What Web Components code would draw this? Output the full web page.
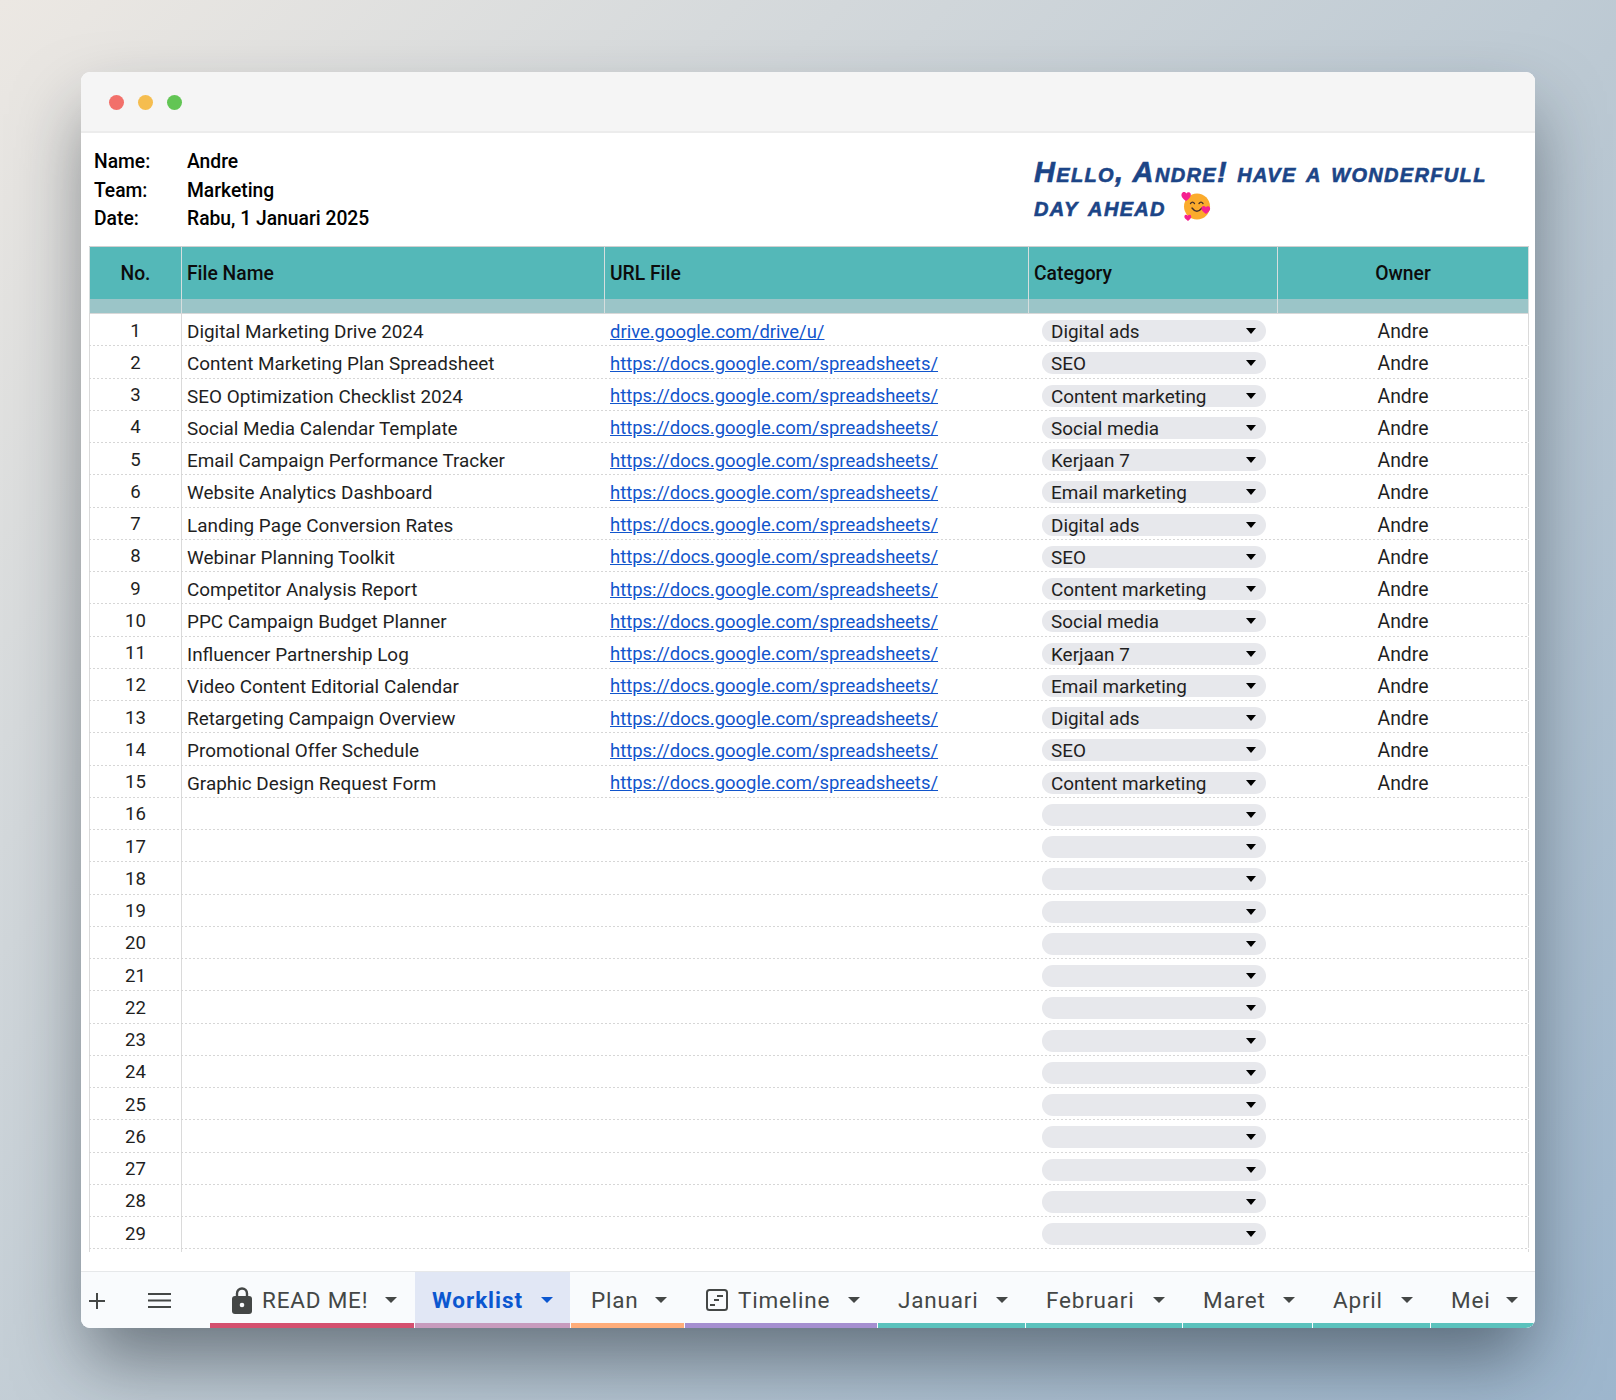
<!DOCTYPE html>
<html>
<head>
<meta charset="utf-8">
<title>Worklist</title>
<style>
  html, body { margin: 0; padding: 0; }
  body {
    width: 1616px;
    height: 1400px;
    overflow: hidden;
    box-sizing: border-box;
    padding: 72px 81px 0;
    background: linear-gradient(135deg, #ece8e3 0%, #d3d8db 28%, #bcc9d3 55%, #9db6cd 100%);
    font-family: Roboto, "Liberation Sans", sans-serif;
  }
</style>
</head>
<body>
<app-window>
  <info-header slot="top" name="Andre" team="Marketing" date="Rabu, 1 Januari 2025"></info-header>
  <work-sheet></work-sheet>
  <sheet-tabs slot="bottom">
    <sheet-tab width="205" color="#d4506f" label="READ ME!" icon="lock" pad="22"></sheet-tab>
    <sheet-tab width="156" color="#c79bbd" label="Worklist" active pad="17"></sheet-tab>
    <sheet-tab width="114" color="#ffad7a" label="Plan"></sheet-tab>
    <sheet-tab width="193" color="#a58fd0" label="Timeline" icon="timeline" pad="21"></sheet-tab>
    <sheet-tab width="148" color="#5bc2bd" label="Januari"></sheet-tab>
    <sheet-tab width="157" color="#5bc2bd" label="Februari"></sheet-tab>
    <sheet-tab width="130" color="#5bc2bd" label="Maret"></sheet-tab>
    <sheet-tab width="118" color="#5bc2bd" label="April"></sheet-tab>
    <sheet-tab width="104" color="#5bc2bd" label="Mei" last></sheet-tab>
  </sheet-tabs>
</app-window>

<script>
// Window frame with the three traffic lights
class AppWindow extends HTMLElement {
  constructor() {
    super();
    this.attachShadow({ mode: 'open' });
    this.shadowRoot.innerHTML = `
      <style>
        :host {
          display: flex;
          flex-direction: column;
          width: 1454px;
          height: 1256px;
          background: #fff;
          border-radius: 9px;
          overflow: hidden;
          box-shadow: 0 36px 70px -6px rgba(20, 30, 40, .5);
        }
        .bar {
          flex: none;
          display: flex;
          align-items: center;
          gap: 14px;
          height: 61px;
          padding-left: 28px;
          padding-top: 1px;
          box-sizing: border-box;
          background: #f5f5f5;
          border-bottom: 2px solid #ececec;
        }
        .dot { width: 15px; height: 15px; border-radius: 50%; }
        .main { flex: 1; min-height: 0; }
      </style>
      <div class="bar">
        <div class="dot" style="background:#f2706a"></div>
        <div class="dot" style="background:#f5bd4f"></div>
        <div class="dot" style="background:#62c554"></div>
      </div>
      <slot name="top"></slot>
      <div class="main"><slot></slot></div>
      <slot name="bottom"></slot>
    `;
  }
}

// Name / team / date block and the greeting on the right
class InfoHeader extends HTMLElement {
  constructor() {
    super();
    this.attachShadow({ mode: 'open' });
    const a = (n) => this.getAttribute(n);
    this.shadowRoot.innerHTML = `
      <style>
        :host {
          display: flex;
          justify-content: space-between;
          height: 113px;
          box-sizing: border-box;
          padding: 14.500px 0 0 13px;
          color: #000;
        }
        .meta {
          display: grid;
          grid-template-columns: 93px auto;
          grid-auto-rows: 28.400px;
          align-items: center;
          align-content: start;
          font-size: 19.300px;
          font-weight: 500;
        }
        .hello {
          width: 501px;
          margin-top: 7.500px;
          font-family: "Liberation Sans", sans-serif;
          font-size: 29px;
          line-height: 34px;
          font-weight: 700;
          font-style: italic;
          font-variant: small-caps;
          letter-spacing: 1.330px;
          -webkit-text-stroke: .6px #1c4587;
          color: #1c4587;
        }
        .hello svg { width: 30px; height: 30px; vertical-align: -5px; margin-left: 6px; }
      </style>
      <div class="meta">
        <span>Name:</span><span>${a('name')}</span>
        <span>Team:</span><span>${a('team')}</span>
        <span>Date:</span><span>${a('date')}</span>
      </div>
      <div class="hello">Hello, Andre! have a wonderfull<br>day ahead
        <svg viewBox="0 0 30 30">
          <circle cx="16" cy="15.500" r="13" fill="#fbab2c"/>
          <path d="M9.500 12.500q2-2.600 4 0M18 12.500q2-2.600 4 0" fill="none" stroke="#43302a" stroke-width="1.300" stroke-linecap="round"/>
          <path d="M11 17q4.800 6.500 10 0" fill="none" stroke="#43302a" stroke-width="1.400" stroke-linecap="round"/>
          <path d="M5 10C1 7 0 5 .6 3 1.500.5 4.200.5 5.200 2.500 6.500.6 9.200.8 9.800 3.200 10.200 5.500 8 8 5 10z" fill="#f5208f"/>
          <path d="M25 23c-3.500-2.400-5-4.300-4.500-6.200.7-2.200 3.200-2.300 4.300-.5 1.300-1.700 3.700-1.500 4.300.6.400 2-1.300 4-4.100 6.100z" fill="#f5208f"/>
          <path d="M7 30c-2.600-1.800-4-3.300-3.600-4.900.6-1.800 2.500-1.800 3.400-.4 1-1.300 2.900-1.200 3.400.5.300 1.500-1 3.200-3.200 4.800z" fill="#f5208f"/>
        </svg>
      </div>
    `;
  }
}

// Grey category dropdown
class CategoryPill extends HTMLElement {
  constructor() {
    super();
    this.attachShadow({ mode: 'open' });
    this.shadowRoot.innerHTML = `
      <style>
        :host {
          display: flex;
          align-items: center;
          justify-content: space-between;
          width: 224px;
          height: 22px;
          box-sizing: border-box;
          padding: 0 10px 0 9px;
          border-radius: 11px;
          background: #e7e8ec;
        }
        span { padding-top: 1px; }
        i { border: 5.500px solid transparent; border-top: 6px solid #000; border-bottom: 0; }
      </style>
      <span><slot></slot></span><i></i>
    `;
  }
}

// One row of the sheet, its cells come from attributes
class SheetRow extends HTMLElement {
  constructor() {
    super();
    this.attachShadow({ mode: 'open' });
  }

  connectedCallback() {
    const a = (n) => this.getAttribute(n) || '';
    const link = a('url') ? `<a href="#">${a('url')}</a>` : '';
    this.shadowRoot.innerHTML = `
      <style>
        :host {
          display: grid;
          grid-template-columns: 93px 423px 424px 249px 1fr;
          height: 32.250px;
          box-sizing: border-box;
          padding-bottom: 1px;
          background: repeating-linear-gradient(90deg, #d6d6d6 0 2.500px, transparent 2.500px 4px) bottom / 100% 1px no-repeat;
          font-size: 18.900px;
          color: #1f1f1f;
        }
        div {
          display: flex;
          align-items: center;
          padding-left: 5px;
          padding-top: 4px;
          box-sizing: border-box;
          white-space: nowrap;
        }
        .no {
          justify-content: center;
          padding: 2px 0 0;
          font-size: 18.600px;
          border-right: 1px solid #dadada;
          border-left: 1px solid #dadada;
        }
        .cat { padding: 3px 0 0 13px; }
        .own { justify-content: center; padding-left: 0; font-size: 19.400px; border-right: 1px solid #dadada; }
        a { color: #1155cc; font-size: 18.450px; }
      </style>
      <div class="no">${a('no')}</div>
      <div>${a('name')}</div>
      <div>${link}</div>
      <div class="cat"><category-pill>${a('cat')}</category-pill></div>
      <div class="own">${a('owner')}</div>
    `;
  }
}

const FILES = [
  'Digital Marketing Drive 2024', 'Content Marketing Plan Spreadsheet', 'SEO Optimization Checklist 2024',
  'Social Media Calendar Template', 'Email Campaign Performance Tracker', 'Website Analytics Dashboard',
  'Landing Page Conversion Rates', 'Webinar Planning Toolkit', 'Competitor Analysis Report',
  'PPC Campaign Budget Planner', 'Influencer Partnership Log', 'Video Content Editorial Calendar',
  'Retargeting Campaign Overview', 'Promotional Offer Schedule', 'Graphic Design Request Form'
];
const CATS = ['Digital ads', 'SEO', 'Content marketing', 'Social media', 'Kerjaan 7', 'Email marketing'];

// The table: header, band and 29 rows
class WorkSheet extends HTMLElement {
  constructor() {
    super();
    this.attachShadow({ mode: 'open' });
    this.shadowRoot.innerHTML = `
      <style>
        :host { display: block; padding: 0 6px 0 8px; }
        .head, .band, .tail {
          display: grid;
          grid-template-columns: 93px 423px 424px 249px 1fr;
        }
        .head {
          height: 53px;
          background: #54b8b8;
          border-top: 1px solid #d0d0d0;
          box-sizing: border-box;
          font-size: 19.300px;
          font-weight: 500;
          color: #0c0c0c;
        }
        .head div { display: flex; align-items: center; padding: 0 0 0 5px; border-right: 1px solid #d6dede; box-sizing: border-box; }
        .head div:first-child, .band div:first-child { border-left: 1px solid #d6dede; }
        .head .c { justify-content: center; padding-left: 0; }
        .band { height: 15px; background: #9bc5c8; border-bottom: 1px solid #d8d8d8; box-sizing: border-box; }
        .band div { border-right: 1px solid #d6dede; }
        .tail { height: 3px; }
        .tail div:first-child { border: 1px solid #dadada; border-width: 0 1px; }
        .tail div:last-child { border-right: 1px solid #dadada; grid-column: 5; }
      </style>
      <div class="head">
        <div class="c">No.</div><div>File Name</div><div>URL File</div><div>Category</div><div class="c">Owner</div>
      </div>
      <div class="band"><div></div><div></div><div></div><div></div><div></div></div>
      <div id="rows"></div>
      <div class="tail"><div></div><div></div></div>
    `;
    const rows = this.shadowRoot.getElementById('rows');
    for (let i = 1; i <= 29; i++) {
      const r = document.createElement('sheet-row');
      r.setAttribute('no', i);
      if (i <= 15) {
        r.setAttribute('name', FILES[i - 1]);
        r.setAttribute('url', i === 1 ? 'drive.google.com/drive/u/' : 'https://docs.google.com/spreadsheets/');
        r.setAttribute('cat', CATS[(i - 1) % 6]);
        r.setAttribute('owner', 'Andre');
      }
      rows.appendChild(r);
    }
  }
}

// Bottom strip with + and menu buttons, tabs are slotted
class SheetTabs extends HTMLElement {
  constructor() {
    super();
    this.attachShadow({ mode: 'open' });
    this.shadowRoot.innerHTML = `
      <style>
        :host {
          display: flex;
          flex: none;
          height: 57px;
          box-sizing: border-box;
          background: #f9fbfd;
          border-top: 1px solid #e6e8ea;
        }
        .tools { flex: none; width: 129px; display: flex; align-items: center; padding-top: 1px; box-sizing: border-box; }
        svg { display: block; }
      </style>
      <div class="tools">
        <svg width="16" height="16" viewBox="0 0 16 16" style="margin-left:8px">
          <path d="M8 0v16M0 8h16" stroke="#444746" stroke-width="2" />
        </svg>
        <svg width="23" height="15" viewBox="0 0 23 15" style="margin-left:43px">
          <path d="M0 1h23M0 7.500h23M0 14h23" stroke="#444746" stroke-width="2" />
        </svg>
      </div>
      <slot></slot>
    `;
  }
}

const TAB_ICONS = {
  lock: `<svg width="20" height="27" viewBox="0 0 20 27"><path d="M5 10V6.500a5 5 0 0 1 10 0V10" fill="none" stroke="#444746" stroke-width="2.400"/><rect y="9" width="20" height="18" rx="3" fill="#444746"/><circle cx="10" cy="18" r="2.300" fill="#f9fbfd"/></svg>`,
  timeline: `<svg width="22" height="22" viewBox="0 0 22 22" fill="none" stroke="#444746" stroke-width="2"><rect x="1" y="1" width="20" height="20" rx="2.500"/><path d="M11 7h6M8 11h5M4 16h5"/></svg>`
};

// One sheet tab with coloured underline
class SheetTab extends HTMLElement {
  constructor() {
    super();
    this.attachShadow({ mode: 'open' });
    const active = this.hasAttribute('active');
    const last = this.hasAttribute('last');
    const icon = TAB_ICONS[this.getAttribute('icon')] || '';
    const col = active ? '#0b57d0' : '#444746';
    this.shadowRoot.innerHTML = `
      <style>
        :host {
          display: flex;
          flex: none;
          align-items: center;
          box-sizing: border-box;
          width: ${this.getAttribute('width') - (last ? 0 : 1)}px;
          margin-right: ${last ? 0 : 1}px;
          padding: 5px 17px 0 ${this.getAttribute('pad') || 20}px;
          border-bottom: 5px solid ${this.getAttribute('color')};
          background: ${active ? '#e1e7f5' : 'transparent'};
          color: ${col};
          font-size: 22.500px;
          font-weight: ${active ? 700 : 400};
          letter-spacing: ${active ? '.95px' : '.8px'};
        }
        svg { display: block; flex: none; margin-right: 10px; }
        i { margin-left: auto; border: 6px solid transparent; border-top: 6px solid ${col}; border-bottom: 0; }
      </style>
      ${icon}<span>${this.getAttribute('label')}</span><i></i>
    `;
  }
}

customElements.define('app-window', AppWindow);
customElements.define('info-header', InfoHeader);
customElements.define('category-pill', CategoryPill);
customElements.define('sheet-row', SheetRow);
customElements.define('work-sheet', WorkSheet);
customElements.define('sheet-tabs', SheetTabs);
customElements.define('sheet-tab', SheetTab);
</script>
</body>
</html>
